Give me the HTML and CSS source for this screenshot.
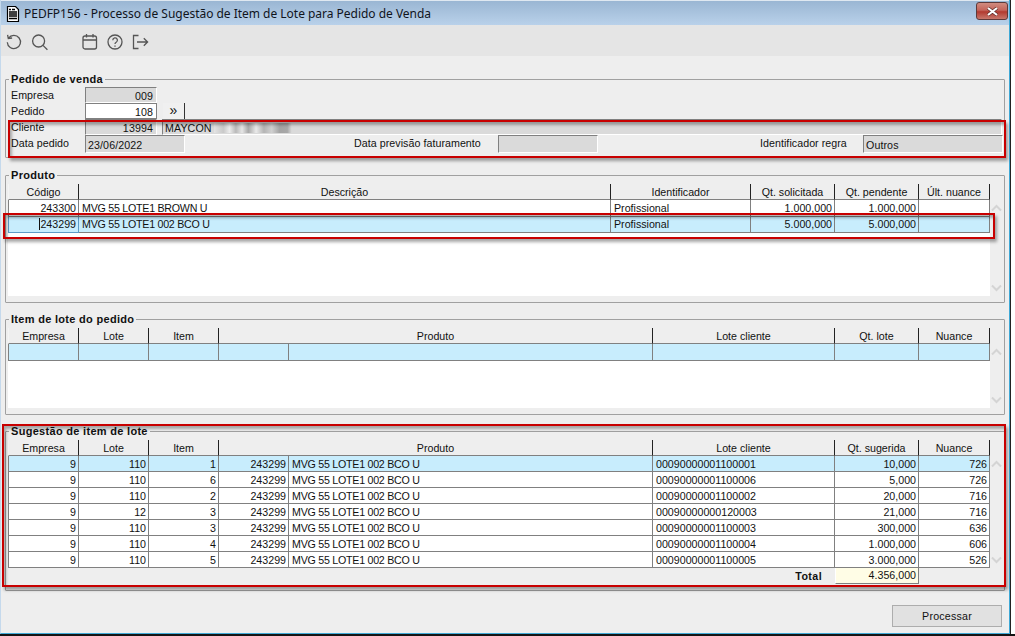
FILE: index.html
```html
<!DOCTYPE html>
<html lang="pt">
<head>
<meta charset="utf-8">
<title>PEDFP156</title>
<link rel="stylesheet" href="styles.css">
</head>
<body>
<div class="window">
  <header class="titlebar">
    <svg class="docicon" width="14" height="16" viewBox="0 0 14 16"><path d="M1.5.5h8l3 3v12h-11z" fill="#fff" stroke="#000" stroke-width="1.2"/><path d="M3 3.5h2M6 3.5h3M3 6h8M3 8h8M3 10h8M3 12.5h8" stroke="#000" stroke-width="1.4"/></svg>
    <span class="title">PEDFP156 - Processo de Sugestão de Item de Lote para Pedido de Venda</span>
    <button class="close"><svg width="13" height="9" viewBox="0 0 13 9"><path d="M2 1l9 7M11 1L2 8" stroke="#5a2a26" stroke-width="3.4"/><path d="M2 1l9 7M11 1L2 8" stroke="#fff" stroke-width="2.2"/></svg></button>
  </header>
  <nav class="toolbar">
    <svg class="tool" width="18" height="18" viewBox="0 0 18 18"><path d="M3.5 5.2A6.6 6.6 0 1 1 2.3 9.3M2.6 1.8l.7 3.8 3.8-.6" fill="none" stroke="#555" stroke-width="1.3"/></svg>
    <svg class="tool tool-b" width="18" height="18" viewBox="0 0 18 18"><circle cx="7.6" cy="8" r="6" fill="none" stroke="#555" stroke-width="1.3"/><path d="M12 12.4l4.4 4.4" stroke="#555" stroke-width="1.3"/></svg>
    <svg class="tool tool-c" width="18" height="18" viewBox="0 0 18 18"><rect x="2" y="3" width="13.5" height="13" rx="2" fill="none" stroke="#555" stroke-width="1.3"/><path d="M2 7h13.5M5.5 1v3.5M12 1v3.5" stroke="#555" stroke-width="1.3"/></svg>
    <svg class="tool tool-d" width="18" height="18" viewBox="0 0 18 18"><circle cx="9" cy="9" r="7" fill="none" stroke="#555" stroke-width="1.3"/><path d="M6.8 7.2a2.3 2.3 0 1 1 3.4 2c-.9.5-1.2 1-1.2 1.9" fill="none" stroke="#555" stroke-width="1.3"/><path d="M9 12.4v1.4" stroke="#555" stroke-width="1.3"/></svg>
    <svg class="tool tool-e" width="18" height="18" viewBox="0 0 18 18"><path d="M7.5 2.5H2.5v13h5M6 9h10.5M12.8 5.2 16.6 9l-3.8 3.8" fill="none" stroke="#555" stroke-width="1.3"/></svg>
  </nav>
  <main class="content">
    <fieldset class="group group-pedido">
      <legend>Pedido de venda</legend>
      <div class="form-row"><span class="lbl">Empresa</span><span class="field f-num ro">009</span></div>
      <div class="form-row"><span class="lbl">Pedido</span><span class="field f-num edit">108</span><button class="more">»</button></div>
      <div class="form-row"><span class="lbl">Cliente</span><span class="field f-num ro">13994</span><span class="field f-name ro">MAYCON<span class="blur"></span></span></div>
      <div class="form-row row-data">
        <span class="lbl">Data pedido</span><span class="field f-date ro">23/06/2022</span>
        <span class="lbl lbl-prev">Data previsão faturamento</span><span class="field f-date ro"></span>
        <span class="lbl lbl-reg">Identificador regra</span><span class="field f-reg ro">Outros</span>
      </div>
    </fieldset>

    <fieldset class="group group-produto">
      <legend>Produto</legend>
      <div class="grid tall-first">
        <div class="grid-main h112">
          <table>
            <colgroup><col class="w71"><col class="w532"><col class="w140"><col class="w84"><col class="w84"><col class="w71"></colgroup>
            <thead><tr><th>Código</th><th>Descrição</th><th>Identificador</th><th>Qt. solicitada</th><th>Qt. pendente</th><th>Últ. nuance</th></tr></thead>
            <tbody>
              <tr><td class="n">243300</td><td class="d">MVG 55 LOTE1 BROWN U</td><td>Profissional</td><td class="n">1.000,000</td><td class="n">1.000,000</td><td></td></tr>
              <tr class="sel"><td class="n focus"><span class="caret">243299</span></td><td class="d">MVG 55 LOTE1 002 BCO U</td><td>Profissional</td><td class="n">5.000,000</td><td class="n">5.000,000</td><td></td></tr>
            </tbody>
          </table>
        </div>
        <div class="scroll"><svg width="11" height="8" viewBox="0 0 11 8"><path d="M1 6.5l4.5-4.5L10 6.5" fill="none" stroke="#d4d4d4" stroke-width="2"/></svg><svg width="11" height="8" viewBox="0 0 11 8"><path d="M1 1.5L5.5 6 10 1.5" fill="none" stroke="#d4d4d4" stroke-width="2"/></svg></div>
      </div>
    </fieldset>

    <fieldset class="group group-item">
      <legend>Item de lote do pedido</legend>
      <div class="grid tall-first">
        <div class="grid-main h80">
          <table>
            <colgroup><col class="w71"><col class="w70"><col class="w70"><col class="w70"><col class="w364"><col class="w182"><col class="w84"><col class="w71"></colgroup>
            <thead><tr><th>Empresa</th><th>Lote</th><th>Item</th><th colspan="2">Produto</th><th>Lote cliente</th><th>Qt. lote</th><th>Nuance</th></tr></thead>
            <tbody><tr class="sel"><td></td><td></td><td></td><td></td><td></td><td></td><td></td><td></td></tr></tbody>
          </table>
        </div>
        <div class="scroll"><svg width="11" height="8" viewBox="0 0 11 8"><path d="M1 6.5l4.5-4.5L10 6.5" fill="none" stroke="#d4d4d4" stroke-width="2"/></svg><svg width="11" height="8" viewBox="0 0 11 8"><path d="M1 1.5L5.5 6 10 1.5" fill="none" stroke="#d4d4d4" stroke-width="2"/></svg></div>
      </div>
    </fieldset>

    <fieldset class="group group-sug">
      <legend>Sugestão de item de lote</legend>
      <div class="grid">
        <div class="grid-main h144">
          <table>
            <colgroup><col class="w71"><col class="w70"><col class="w70"><col class="w70"><col class="w364"><col class="w182"><col class="w84"><col class="w71"></colgroup>
            <thead><tr><th>Empresa</th><th>Lote</th><th>Item</th><th colspan="2">Produto</th><th>Lote cliente</th><th>Qt. sugerida</th><th>Nuance</th></tr></thead>
            <tbody>
              <tr class="sel"><td class="n">9</td><td class="n">110</td><td class="n">1</td><td class="n">243299</td><td class="d">MVG 55 LOTE1 002 BCO U</td><td>00090000001100001</td><td class="n">10,000</td><td class="n">726</td></tr>
              <tr><td class="n">9</td><td class="n">110</td><td class="n">6</td><td class="n">243299</td><td class="d">MVG 55 LOTE1 002 BCO U</td><td>00090000001100006</td><td class="n">5,000</td><td class="n">726</td></tr>
              <tr><td class="n">9</td><td class="n">110</td><td class="n">2</td><td class="n">243299</td><td class="d">MVG 55 LOTE1 002 BCO U</td><td>00090000001100002</td><td class="n">20,000</td><td class="n">716</td></tr>
              <tr><td class="n">9</td><td class="n">12</td><td class="n">3</td><td class="n">243299</td><td class="d">MVG 55 LOTE1 002 BCO U</td><td>00090000000120003</td><td class="n">21,000</td><td class="n">716</td></tr>
              <tr><td class="n">9</td><td class="n">110</td><td class="n">3</td><td class="n">243299</td><td class="d">MVG 55 LOTE1 002 BCO U</td><td>00090000001100003</td><td class="n">300,000</td><td class="n">636</td></tr>
              <tr><td class="n">9</td><td class="n">110</td><td class="n">4</td><td class="n">243299</td><td class="d">MVG 55 LOTE1 002 BCO U</td><td>00090000001100004</td><td class="n">1.000,000</td><td class="n">606</td></tr>
              <tr><td class="n">9</td><td class="n">110</td><td class="n">5</td><td class="n">243299</td><td class="d">MVG 55 LOTE1 002 BCO U</td><td>00090000001100005</td><td class="n">3.000,000</td><td class="n">526</td></tr>
            </tbody>
            <tfoot><tr><td colspan="6" class="total-lbl">Total</td><td class="n total">4.356,000</td><td class="blank"></td></tr></tfoot>
          </table>
        </div>
        <div class="scroll scroll-sug"><svg width="11" height="8" viewBox="0 0 11 8"><path d="M1 6.5l4.5-4.5L10 6.5" fill="none" stroke="#d4d4d4" stroke-width="2"/></svg><svg width="11" height="8" viewBox="0 0 11 8"><path d="M1 1.5L5.5 6 10 1.5" fill="none" stroke="#d4d4d4" stroke-width="2"/></svg></div>
      </div>
    </fieldset>

    <footer class="actions"><button class="primary">Processar</button></footer>

    <div class="mark mark-a"></div>
    <div class="mark mark-b"></div>
    <div class="mark mark-c"></div>
  </main>
</div>
</body>
</html>
```

FILE: styles.css
```css
* { box-sizing: border-box; }
html, body { margin: 0; height: 100%; }
body {
  background: linear-gradient(#fff 634px, #141414 634px);
  overflow: hidden;
  font: 10.67px/14px "Liberation Sans", Arial, sans-serif;
  color: #111;
}
.window {
  width: 1010px;
  height: 634px;
  display: flex;
  flex-direction: column;
  background: #eeeeee;
  border-left: 1px solid #c5d9ec;
  border-right: 1px solid #3fa9d6;
  border-bottom: 1px solid #3fa9d6;
  box-shadow: 1px 0 0 #222;
}
.titlebar {
  height: 25px;
  flex: none;
  display: flex;
  align-items: center;
  padding: 1px 1px 0 5px;
  background: linear-gradient(#9ab6d3, #b9d1ea);
  border-top: 1px solid #dfe8f1;
}
.docicon { flex: none; margin-right: 4px; }
.title {
  font: 12px "Noto Sans", sans-serif;
  letter-spacing: -0.02px;
  flex: 1;
  color: #10141c;
}
.close {
  width: 32px;
  height: 18px;
  padding: 0;
  margin-top: -5px;
  display: flex;
  align-items: center;
  justify-content: center;
  border: 1px solid #5d3a3a;
  border-radius: 3px;
  background: linear-gradient(#d08c80 0, #c4645a 45%, #b23a30 55%, #c8786c 100%);
}
.toolbar {
  height: 31px;
  flex: none;
  display: flex;
  align-items: center;
  padding: 3px 0 0 4px;
  background: #e5e5e5;
}
.tool { flex: none; }
.tool-b { margin-left: 8px; }
.tool-c { margin-left: 32px; }
.tool-d { margin-left: 7px; }
.tool-e { margin-left: 7px; }

.content {
  position: relative;
  flex: 1;
  padding: 16px 4px 0 4px;
}
.group {
  margin: 0;
  padding: 0;
  min-width: 0;
  border: 1px solid #a0a0a0;
  border-radius: 1px;
}
.group legend {
  margin-left: 3px;
  padding: 0 2px;
  font-weight: bold;
  font-size: 11px;
  letter-spacing: 0.3px;
  line-height: 14px;
  color: #111;
}
.group-pedido { height: 86px; padding-top: 1px; }
.group-produto { height: 135px; margin-top: 10px; padding-top: 2px; }
.group-item { height: 103px; margin-top: 9px; padding-top: 2px; }
.group-sug { height: 167px; margin-top: 9px; padding-top: 2px; }

.form-row { display: flex; align-items: center; height: 16px; margin-left: 5px; }
.row-data { height: 18px; }
.lbl { width: 74px; flex: none; letter-spacing: 0.05px; }
.row-data .lbl { margin-top: -2px; }
.row-data .lbl-prev { width: 144px; margin-left: 169px; }
.row-data .lbl-reg { width: 103px; margin-left: 162px; }
.field {
  display: block;
  height: 100%;
  flex: none;
  padding: 1px 3px 0 2px;
  line-height: 14px;
  letter-spacing: 0.1px;
  white-space: nowrap;
  border: 1px solid;
  border-color: #808080 #fff #fff #808080;
}
.row-data .field { padding-top: 2px; padding-left: 2px; }
.ro { background: #dadada; }
.edit { background: #fff; border-color: #808080; }
.f-num { width: 72px; text-align: right; }
.f-name { flex: 1; margin: 0 2px 0 5px; }
.f-date { width: 100px; }
.f-reg { width: 140px; }
.blur {
  display: inline-block;
  width: 78px;
  height: 10px;
  margin-left: 2px;
  vertical-align: -1px;
  background:
    linear-gradient(90deg, #e4e4e4 0, #c9c9c9 12%, #ececec 20%, #b9b9b9 28%, #e6e6e6 36%, #a8a8a8 44%, #eaeaea 54%, #b4b4b4 64%, #d0d0d0 74%, #a4a4a4 84%, #a8a8a8 94%, #ddd 100%);
}
.more {
  width: 22px;
  height: 16px;
  margin-left: 6px;
  padding: 0 0 2px;
  font: 14px/12px "Liberation Sans", sans-serif;
  color: #111;
  background: #f0f0f0;
  border: 0;
  border-right: 1px solid #333;
}

.grid { display: flex; margin-left: 2px; }
.grid-main { width: 982px; flex: none; background: #fff; }
.h112 { height: 112px; }
.h80 { height: 80px; }
.h144 { height: 144px; background: linear-gradient(#fff 128px, #eee 128px); }
table { border-collapse: separate; border-spacing: 0; table-layout: fixed; width: 982px; }
.w70 { width: 70px; }
.w71 { width: 71px; }
.w84 { width: 84px; }
.w140 { width: 140px; }
.w182 { width: 182px; }
.w364 { width: 364px; }
.w532 { width: 532px; }
th {
  height: 16px;
  padding: 0;
  font-weight: normal;
  line-height: 14px;
  text-align: center;
  background: #eee;
  border-bottom: 1px solid #808080;
  border-right: 1px solid #222;
}
th:first-child { border-left: 1px solid #f4f4f4; }
td {
  height: 16px;
  padding: 1px 2px 0 3px;
  line-height: 13px;
  white-space: nowrap;
  overflow: hidden;
  background: #fff;
  border-right: 1px solid #808080;
  border-bottom: 1px solid #808080;
}
td:first-child { border-left: 1px solid #808080; }
td.n { text-align: right; }
td.d { letter-spacing: -0.25px; }
.sel td { background: #c8edfd; }
td.focus { border-color: #5d9cc8; }
.caret { border-left: 1px solid #111; }
.tall-first tbody tr:first-child td { height: 17px; padding-top: 1px; }
.tall-first .sel td { padding-top: 0; }
tfoot td { border: 0; background: #eee; padding-top: 0; }
tfoot td:first-child { border: 0; }
td.total-lbl { text-align: right; font-weight: bold; letter-spacing: 0.4px; padding-right: 13px; }
tfoot td.total {
  background: #fffde6;
  border-right: 1px solid #808080;
  border-bottom: 1px solid #808080;
  border-left: 1px solid #fff;
}
.scroll {
  flex: 1;
  display: flex;
  flex-direction: column;
  align-items: center;
  justify-content: space-between;
  padding: 20px 1px 4px 0;
}
.scroll-sug { padding-bottom: 20px; }

.actions { display: flex; justify-content: flex-end; padding: 14px 3px 0 0; }
.primary {
  width: 110px;
  height: 22px;
  padding: 0;
  font: 10.67px "Liberation Sans", sans-serif;
  letter-spacing: 0.2px;
  color: #111;
  background: #e1e1e1;
  border: 1px solid #adadad;
}

.mark {
  position: absolute;
  border: 2px solid #c80000;
  box-shadow: 2px 3px 3px rgba(0,0,0,.35), inset 2px 3px 3px rgba(0,0,0,.3);
  pointer-events: none;
}
.mark-a { left: 7px; top: 64px; width: 998px; height: 38px; }
.mark-b { left: 2px; top: 157px; width: 992px; height: 26px; }
.mark-c { left: 1px; top: 368px; width: 1004px; height: 163px; }
```
